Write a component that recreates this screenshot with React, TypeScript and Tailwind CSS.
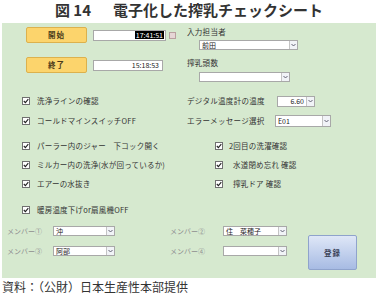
import React from 'react'

const FONT = '"Noto Sans CJK JP", "Noto Sans", sans-serif'

const Check = () => (
  <span className="w-[8px] h-[8px] border border-[#707070] bg-white flex items-center justify-center shrink-0">
    <svg width="6" height="6" viewBox="0 0 6 6">
      <path d="M0.8 3 L2.4 4.6 L5.3 1.2" fill="none" stroke="#222" strokeWidth="1.1" />
    </svg>
  </span>
)

const Select = ({ value = '', className = '', right = false }: { value?: string; className?: string; right?: boolean }) => (
  <div className={`flex items-stretch bg-white border border-[#a8a8a8] h-[10px] ${className}`}>
    <div className={`flex-1 flex items-center px-[2px] text-[7px] leading-none text-[#222] ${right ? 'justify-end' : ''}`}>
      {value}
    </div>
    <div className="w-[8px] border-l border-[#c4c4c4] bg-[#f1f3f7] flex items-center justify-center">
      <svg width="5" height="4" viewBox="0 0 5 4">
        <path d="M0.5 1 L2.5 3 L4.5 1" fill="none" stroke="#556" strokeWidth="0.9" />
      </svg>
    </div>
  </div>
)

const CheckRow = ({ label, className = '' }: { label: string; className?: string }) => (
  <div className={`flex items-center ${className}`}>
    <Check />
    <span className="text-[7.5px] leading-none text-[#333] whitespace-nowrap tracking-[0.2px]">{label}</span>
  </div>
)

const OrangeButton = ({ label }: { label: string }) => (
  <div className="w-[61px] h-[16px] rounded-[2px] border border-[#dcb14d] bg-[#fcd46c] flex items-center justify-center text-[7.5px] font-bold text-[#4a3a1a] tracking-[1px]">
    {label}
  </div>
)

export default function App() {
  return (
    <div className="w-[378px] h-[298px] bg-white overflow-hidden" style={{ fontFamily: FONT }}>
      {/* Title */}
      <div className="h-[23px] flex items-start justify-center pt-[0px] text-[15px] leading-[20px] font-bold text-[#333]">
        <span>図 14</span>
        <span className="w-[22px]" />
        <span>電子化した搾乳チェックシート</span>
      </div>

      {/* Form panel */}
      <div className="ml-[2px] w-[374px] h-[255px] bg-[#d6e9cf] flex flex-col">
        {/* Top section */}
        <div className="h-[68px] flex">
          <div className="w-[183px] pl-[24px] pt-[4px] flex flex-col">
            <div className="flex items-center h-[16px]">
              <OrangeButton label="開始" />
              <div className="ml-[6px] w-[73px] h-[11px] bg-white border border-[#a8a8a8] flex items-center justify-end pr-[1px]">
                <span className="bg-black text-white text-[7px] leading-[8px] px-[1px]">17:41:51</span>
              </div>
              <div className="ml-[3px] w-[7px] h-[7px] bg-[#e6d6d6] border border-[#b9a0a0]" />
            </div>
            <div className="flex items-center h-[16px] mt-[14px]">
              <OrangeButton label="終了" />
              <div className="ml-[6px] w-[70px] h-[11px] bg-white border border-[#a8a8a8] flex items-center justify-end pr-[3px]">
                <span className="text-[#222] text-[7px] leading-[8px]">15:18:53</span>
              </div>
            </div>
          </div>
          <div className="flex-1 pt-[4px] pl-[2px] flex flex-col">
            <div className="h-[10px] flex items-center text-[7.5px] text-[#333] tracking-[0.3px]">入力担当者</div>
            <Select value="前田" className="ml-[12px] mt-[3px] w-[99px]" />
            <div className="h-[10px] mt-[8px] flex items-center text-[7.5px] text-[#333] tracking-[0.3px]">搾乳頭数</div>
            <Select className="ml-[12px] mt-[4px] w-[91px]" />
          </div>
        </div>

        {/* Row 1 */}
        <div className="h-[20px] flex items-center">
          <CheckRow label="洗浄ラインの確認" className="w-[183px] pl-[20px] gap-[7px]" />
          <div className="flex-1 flex items-center pl-[2px]">
            <span className="w-[90px] text-[7.5px] text-[#333] tracking-[0.3px] whitespace-nowrap">デジタル温度計の温度</span>
            <Select value="6.60" right className="w-[38px] h-[11px]" />
          </div>
        </div>

        {/* Row 2 */}
        <div className="h-[20px] flex items-center">
          <CheckRow label="コールドマインスイッチOFF" className="w-[183px] pl-[20px] gap-[7px]" />
          <div className="flex-1 flex items-center pl-[2px]">
            <span className="w-[88px] text-[7.5px] text-[#333] tracking-[0.3px] whitespace-nowrap">エラーメッセージ選択</span>
            <Select value="E01" className="w-[56px] h-[12px]" />
          </div>
        </div>

        {/* Row 3 */}
        <div className="h-[20px] mt-[5px] flex items-center">
          <CheckRow label="パーラー内のジャー　下コック開く" className="w-[183px] pl-[20px] gap-[7px]" />
          <CheckRow label="2回目の洗濯確認" className="pl-[30px] gap-[6px]" />
        </div>

        {/* Row 4 */}
        <div className="h-[18px] flex items-center">
          <CheckRow label="ミルカー内の洗浄(水が回っているか)" className="w-[183px] pl-[20px] gap-[7px]" />
          <CheckRow label="水道閉め忘れ 確認" className="pl-[30px] gap-[10px]" />
        </div>

        {/* Row 5 */}
        <div className="h-[20px] flex items-center">
          <CheckRow label="エアーの水抜き" className="w-[183px] pl-[20px] gap-[7px]" />
          <CheckRow label="搾乳ドア 確認" className="pl-[30px] gap-[10px]" />
        </div>

        {/* Row 6 */}
        <div className="h-[20px] mt-[6px] flex items-center">
          <CheckRow label="暖房温度下げor扇風機OFF" className="pl-[20px] gap-[7px]" />
        </div>

        {/* Members */}
        <div className="flex h-[40px] mt-[1px]">
          <div className="flex flex-col">
            <div className="h-[20px] flex items-center">
              <span className="w-[51px] pl-[5px] text-[7px] text-[#8f8f8f] whitespace-nowrap">メンバー①</span>
              <Select value="沖" className="w-[62px]" />
              <span className="ml-[55px] w-[53px] text-[7px] text-[#8f8f8f] whitespace-nowrap">メンバー②</span>
              <Select value="住　菜穂子" className="w-[64px]" />
            </div>
            <div className="h-[20px] flex items-center">
              <span className="w-[51px] pl-[5px] text-[7px] text-[#8f8f8f] whitespace-nowrap">メンバー③</span>
              <Select value="阿部" className="w-[62px]" />
              <span className="ml-[55px] w-[53px] text-[7px] text-[#8f8f8f] whitespace-nowrap">メンバー④</span>
              <Select className="w-[64px]" />
            </div>
          </div>
          <div className="ml-[21px] mt-[14px] w-[49px] h-[35px] rounded-[2px] border border-[#8fa3cc] bg-gradient-to-b from-[#dfe7f7] to-[#a7bbe3] flex items-center justify-center text-[7.5px] font-bold text-[#3a4258] tracking-[1px]">
            登録
          </div>
        </div>
      </div>

      {/* Caption */}
      <div className="pl-[2px] pt-[2px] text-[12px] leading-[14px] text-[#333]">資料：（公財）日本生産性本部提供</div>
    </div>
  )
}
